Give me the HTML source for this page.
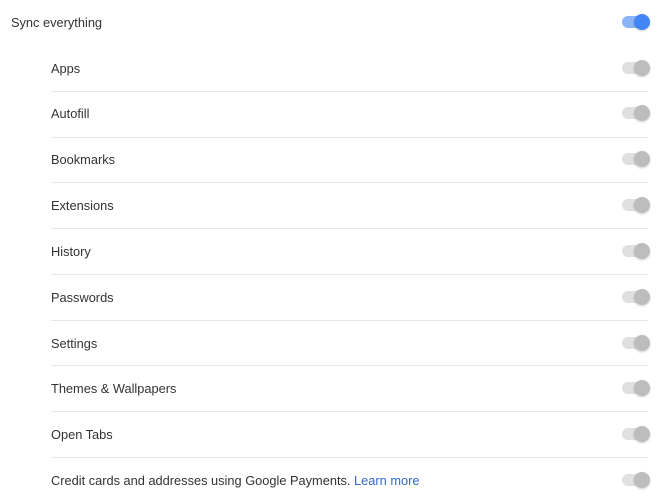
<!DOCTYPE html><html><head><style>
body{margin:0;width:664px;height:500px;background:#fff;font-family:"Liberation Sans",sans-serif;font-size:12.8px;color:#333;position:relative;overflow:hidden}
.t{position:absolute;line-height:16px}
.d{position:absolute;left:51px;width:597px;height:1px;background:#e8e8e8}
.tr{position:absolute;left:622px;width:27px;height:12px;border-radius:6px;background:#e0e0e0}
.k{position:absolute;left:634px;width:16px;height:16px;border-radius:50%;background:#bdbdbd;box-shadow:0 1px 2px rgba(0,0,0,.2)}
a{color:#3367d6;text-decoration:none}
</style></head><body>
<div class="t" style="left:11px;top:15px">Sync everything</div>
<div class="tr" style="top:16px;background:#8ab4f8"></div>
<div class="k" style="top:14px;background:#4285f4"></div>
<div class="t" style="left:51px;top:61px">Apps</div>
<div class="t" style="left:51px;top:106px">Autofill</div>
<div class="t" style="left:51px;top:152px">Bookmarks</div>
<div class="t" style="left:51px;top:198px">Extensions</div>
<div class="t" style="left:51px;top:244px">History</div>
<div class="t" style="left:51px;top:290px">Passwords</div>
<div class="t" style="left:51px;top:336px">Settings</div>
<div class="t" style="left:51px;top:381px">Themes &amp; Wallpapers</div>
<div class="t" style="left:51px;top:427px">Open Tabs</div>
<div class="t" style="left:51px;top:473px">Credit cards and addresses using Google Payments. <a>Learn more</a></div>
<div class="d" style="top:91px"></div><div class="d" style="top:137px"></div><div class="d" style="top:182px"></div><div class="d" style="top:228px"></div><div class="d" style="top:274px"></div><div class="d" style="top:320px"></div><div class="d" style="top:365px"></div><div class="d" style="top:411px"></div><div class="d" style="top:457px"></div>
<div class="tr" style="top:62px"></div><div class="k" style="top:60px"></div>
<div class="tr" style="top:107px"></div><div class="k" style="top:105px"></div>
<div class="tr" style="top:153px"></div><div class="k" style="top:151px"></div>
<div class="tr" style="top:199px"></div><div class="k" style="top:197px"></div>
<div class="tr" style="top:245px"></div><div class="k" style="top:243px"></div>
<div class="tr" style="top:291px"></div><div class="k" style="top:289px"></div>
<div class="tr" style="top:337px"></div><div class="k" style="top:335px"></div>
<div class="tr" style="top:382px"></div><div class="k" style="top:380px"></div>
<div class="tr" style="top:428px"></div><div class="k" style="top:426px"></div>
<div class="tr" style="top:474px"></div><div class="k" style="top:472px"></div>
</body></html>
